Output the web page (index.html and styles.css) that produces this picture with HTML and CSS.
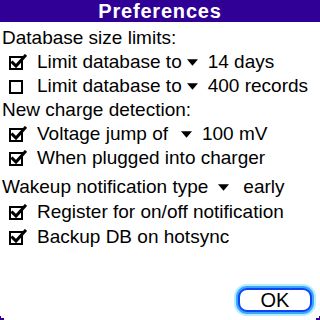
FILE: index.html
```html
<!DOCTYPE html>
<html lang="en">
<head>
  <meta charset="UTF-8">
  <title>Preferences</title>
  <link rel="stylesheet" href="styles.css">
</head>
<body>
  <div class="dialog">
    <div class="title">Preferences</div>

    <div class="form">
      <div class="label">Database size limits:</div>
      <div class="row">
        <svg class="check" viewBox="0 0 18 16"><rect x="1" y="3" width="12" height="12"/><path d="M3.5 8.5 L7 12 L16 2"/></svg>
        <span class="text">Limit database to</span>
        <span class="trigger t-limit"><svg viewBox="0 0 12 7"><path d="M0 0 H12 L6 7 Z"/></svg>14 days</span>
      </div>
      <div class="row">
        <svg class="check off" viewBox="0 0 18 16"><rect x="1" y="3" width="12" height="12"/></svg>
        <span class="text">Limit database to</span>
        <span class="trigger t-limit"><svg viewBox="0 0 12 7"><path d="M0 0 H12 L6 7 Z"/></svg>400 records</span>
      </div>

      <div class="label">New charge detection:</div>
      <div class="row">
        <svg class="check" viewBox="0 0 18 16"><rect x="1" y="3" width="12" height="12"/><path d="M3.5 8.5 L7 12 L16 2"/></svg>
        <span class="text">Voltage jump of</span>
        <span class="trigger t-volt"><svg viewBox="0 0 12 7"><path d="M0 0 H12 L6 7 Z"/></svg>100 mV</span>
      </div>
      <div class="row">
        <svg class="check" viewBox="0 0 18 16"><rect x="1" y="3" width="12" height="12"/><path d="M3.5 8.5 L7 12 L16 2"/></svg>
        <span class="text">When plugged into charger</span>
      </div>

      <div class="label wake">Wakeup notification type
        <span class="trigger t-wake"><svg viewBox="0 0 12 7"><path d="M0 0 H12 L6 7 Z"/></svg>early</span>
      </div>
      <div class="row tall">
        <svg class="check" viewBox="0 0 18 16"><rect x="1" y="3" width="12" height="12"/><path d="M3.5 8.5 L7 12 L16 2"/></svg>
        <span class="text">Register for on/off notification</span>
      </div>
      <div class="row tall">
        <svg class="check" viewBox="0 0 18 16"><rect x="1" y="3" width="12" height="12"/><path d="M3.5 8.5 L7 12 L16 2"/></svg>
        <span class="text">Backup DB on hotsync</span>
      </div>
    </div>

    <div class="actions">
      <button class="ok">OK</button>
    </div>

    <span class="corner left"></span>
    <span class="corner right"></span>
  </div>
</body>
</html>
```

FILE: styles.css
```css
* {
  margin: 0;
  padding: 0;
  box-sizing: border-box;
}

body {
  width: 320px;
  height: 320px;
  overflow: hidden;
  background: #fff;
  color: #000;
  font-family: "Liberation Sans", Arial, sans-serif;
}

.dialog {
  position: relative;
  width: 320px;
  height: 320px;
  display: flex;
  flex-direction: column;
}

/* Title bar */
.title {
  height: 22px;
  background: #300096;
  color: #fff;
  font-weight: bold;
  font-size: 20px;
  letter-spacing: 0.8px;
  line-height: 22px;
  text-align: center;
}

.form {
  display: flex;
  flex-direction: column;
  padding: 4px 0 0 2px;
  font-size: 19px;
}

.label {
  height: 24px;
  line-height: 24px;
  display: flex;
  align-items: center;
}

.label.wake {
  margin-top: 5px;
}

.row {
  height: 24px;
  display: flex;
  align-items: center;
  padding-left: 7px;
}

.row.tall {
  height: 25px;
}

.check {
  width: 18px;
  height: 16px;
  margin-right: 10px;
  fill: none;
  stroke: #000;
}

.check rect {
  stroke-width: 2;
}

.check path {
  stroke-width: 3;
  stroke-linecap: square;
}

/* Popup triggers */
.trigger {
  display: flex;
  align-items: center;
}

.trigger svg {
  width: 11px;
  height: 7px;
  margin-right: 10px;
  fill: #000;
}

.t-limit {
  margin-left: 5px;
}

.t-volt {
  margin-left: 13px;
}

.t-wake {
  margin-left: 10px;
}

.t-wake svg {
  margin-right: 14px;
}

/* Button */
.actions {
  margin-top: auto;
  display: flex;
  justify-content: flex-end;
  padding: 0 8px 8px 0;
}

.ok {
  width: 74px;
  height: 24px;
  border: 2px solid #0d46f0;
  border-radius: 9px;
  background: #fff;
  box-shadow: 0 0 0 2px #3ca6ff, 0 0 0 4px #b6ecff;
  font-family: "Liberation Sans", Arial, sans-serif;
  font-size: 20px;
  line-height: 18px;
  color: #000;
}

/* Frame corners at the bottom */
.corner {
  position: absolute;
  bottom: 0;
  width: 4px;
  height: 4px;
  border-bottom: 2px solid #300096;
}

.corner.left {
  left: 0;
  border-left: 1px solid #300096;
}

.corner.right {
  right: 0;
  border-right: 1px solid #300096;
}
```
